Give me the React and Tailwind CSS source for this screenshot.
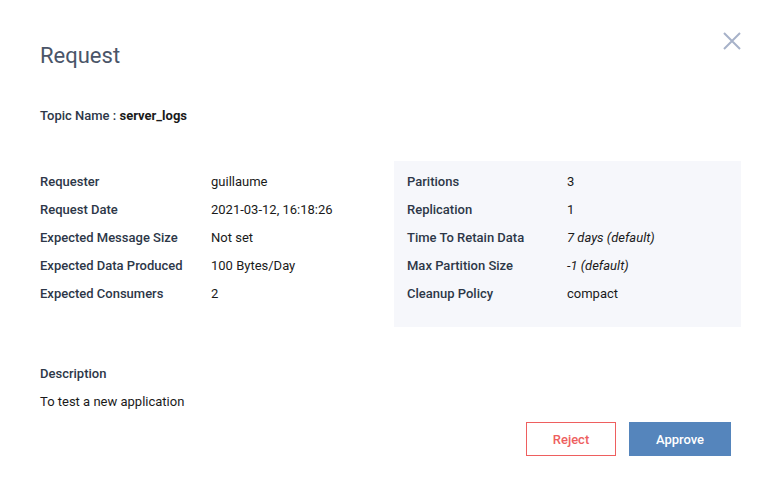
const left = [
  ['Requester', 'guillaume'],
  ['Request Date', '2021-03-12, 16:18:26'],
  ['Expected Message Size', 'Not set'],
  ['Expected Data Produced', '100 Bytes/Day'],
  ['Expected Consumers', '2'],
];

const right = [
  ['Paritions', '3'],
  ['Replication', '1'],
  ['Time To Retain Data', '7 days (default)', true],
  ['Max Partition Size', '-1 (default)', true],
  ['Cleanup Policy', 'compact'],
];

function Row({ label, value, italic, labelWidth }) {
  return (
    <div className="flex h-[28px] items-center">
      <div className={`${labelWidth} font-medium text-[#2d3748]`}>{label}</div>
      <div className={`text-[#1a1a1a] ${italic ? 'italic' : ''}`}>{value}</div>
    </div>
  );
}

export default function App() {
  return (
    <div className="relative w-[773px] h-[497px] bg-white pl-10 pr-8 pt-[42px] text-[13px] leading-[28px]" style={{ fontFamily: 'Roboto, "Liberation Sans", sans-serif' }}>
      <button className="absolute right-[32px] top-[32px] text-[#a7b2c9]">
        <svg width="18" height="18" viewBox="0 0 18 18" fill="none" stroke="currentColor" strokeWidth="2">
          <path d="M1 1L17 17M17 1L1 17" />
        </svg>
      </button>

      <h1 className="text-[22px] leading-[28px] text-[#4a5568]">Request</h1>

      <div className="mt-[36px] leading-[20px] font-medium text-[#2d3748]">
        Topic Name : <span className="font-bold text-[#1a1a1a]">server_logs</span>
      </div>

      <div className="mt-[35px] flex">
        <div className="w-[354px] pt-[7px]">
          {left.map(([l, v]) => (
            <Row key={l} label={l} value={v} labelWidth="w-[171px]" />
          ))}
        </div>
        <div className="w-[347px] bg-[#f6f7fb] pl-[13px] pt-[7px] pb-[19px]">
          {right.map(([l, v, i]) => (
            <Row key={l} label={l} value={v} italic={i} labelWidth="w-[160px]" />
          ))}
        </div>
      </div>

      <div className="mt-[33px]">
        <div className="font-medium text-[#2d3748]">Description</div>
        <div className="text-[#1a1a1a]">To test a new application</div>
      </div>

      <div className="mt-[6px] flex justify-end gap-[13px] pr-[10px]">
        <button className="h-[34px] w-[90px] border border-[#ee5f5f] pt-[2px] text-[13px] font-medium text-[#ee5f5f]">Reject</button>
        <button className="h-[34px] w-[102px] bg-[#5585bc] pt-[2px] text-[13px] font-medium text-white">Approve</button>
      </div>
    </div>
  );
}
